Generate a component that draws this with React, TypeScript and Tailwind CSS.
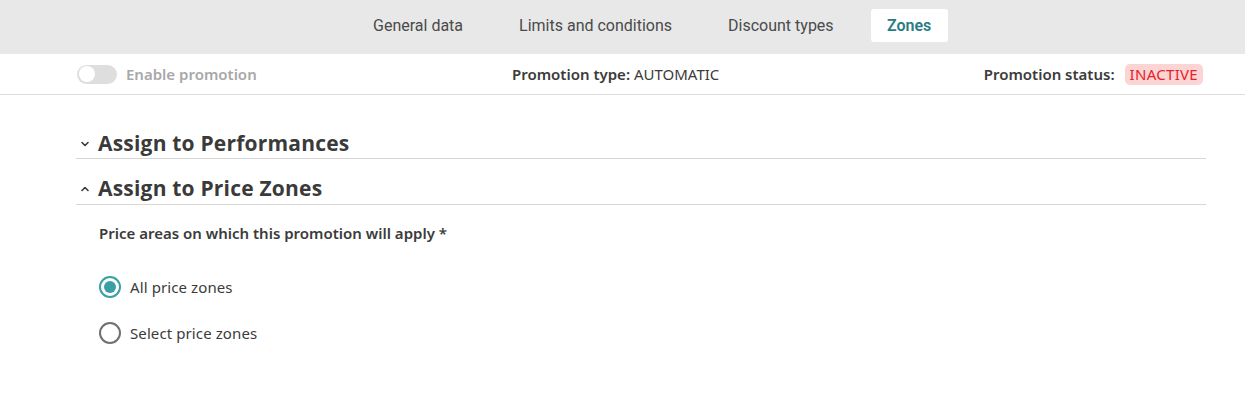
import React from "react";

const body = { fontFamily: '"Noto Sans", "Lato", sans-serif' };
const head = { fontFamily: '"Open Sans", "Noto Sans", sans-serif' };
const tabs = { fontFamily: '"Roboto", "Noto Sans", sans-serif' };

function Chevron({ up }: { up?: boolean }) {
  return (
    <svg width="10" height="10" viewBox="0 0 10 10" className="mr-[8px]">
      <path
        d={up ? "M2 6.5 L5 3.5 L8 6.5" : "M2 3.5 L5 6.5 L8 3.5"}
        fill="none"
        stroke="#3a3a3a"
        strokeWidth="1.6"
        strokeLinecap="round"
        strokeLinejoin="round"
      />
    </svg>
  );
}

export default function App() {
  return (
    <div className="w-[1245px] h-[410px] bg-white text-[#3b3b3b]" style={body}>
      <div className="h-[54px] bg-[#e8e8e8] flex items-start pt-[9px]" style={tabs}>
        <div className="ml-[345px] flex items-center text-[16px] text-[#4a4a4a]">
          <div className="px-[28px] h-[33px] flex items-center">General data</div>
          <div className="px-[28px] h-[33px] flex items-center">Limits and conditions</div>
          <div className="px-[28px] h-[33px] flex items-center">Discount types</div>
          <div className="ml-[9px] w-[77px] justify-center h-[33px] flex items-center bg-white rounded-[3px] text-[#2b7b84] font-semibold">
            Zones
          </div>
        </div>
      </div>
      <div className="h-[41px] border-b border-[#dcdcdc] flex items-center">
        <div className="w-[1128px] ml-[77px] grid grid-cols-[435px_1fr_auto] items-center text-[15px]">
          <div className="flex items-center">
            <div className="w-[40px] h-[19px] rounded-full bg-[#dedede] flex items-center px-[2px]">
              <div className="w-[16px] h-[16px] rounded-full bg-white" />
            </div>
            <span className="ml-[9px] font-semibold text-[#a8a8a8]">Enable promotion</span>
          </div>
          <div className="text-[#3b3b3b]">
            <span className="font-semibold">Promotion type:</span> AUTOMATIC
          </div>
          <div className="flex items-center justify-end mr-[2px]">
            <span className="font-semibold">Promotion status:</span>
            <span className="ml-[10px] bg-[#fbd4d4] text-[#e5232a] rounded-[5px] px-[5px] h-[21px] flex items-center tracking-[0.3px]">
              INACTIVE
            </span>
          </div>
        </div>
      </div>
      <div className="ml-[76px] w-[1130px] pt-[34px]">
        <div className="h-[30px] flex items-center border-b border-[#d6d6d6] pl-[4px]">
          <Chevron />
          <span className="text-[21px] tracking-[0.2px] font-bold text-[#3a3a3a]" style={head}>Assign to Performances</span>
        </div>
        <div className="h-[46px] pt-[15px] flex items-center border-b border-[#d6d6d6] pl-[4px]">
          <Chevron up />
          <span className="text-[21px] tracking-[0.2px] font-bold text-[#3a3a3a]" style={head}>Assign to Price Zones</span>
        </div>
        <div className="pl-[23px] pt-[17px]">
          <div className="text-[15px] font-semibold text-[#3b3b3b]">Price areas on which this promotion will apply *</div>
          <div className="mt-[31px] flex flex-col gap-[24px]">
            <label className="flex items-center gap-[9px] text-[15px] tracking-[0.1px] text-[#3b3b3b]">
              <span className="w-[22px] h-[22px] rounded-full border-[2px] border-[#3aa0a3] flex items-center justify-center">
                <span className="w-[12px] h-[12px] rounded-full bg-[#3aa0a3]" />
              </span>
              All price zones
            </label>
            <label className="flex items-center gap-[9px] text-[15px] tracking-[0.1px] text-[#3b3b3b]">
              <span className="w-[22px] h-[22px] rounded-full border-[2px] border-[#707070]" />
              Select price zones
            </label>
          </div>
        </div>
      </div>
    </div>
  );
}
